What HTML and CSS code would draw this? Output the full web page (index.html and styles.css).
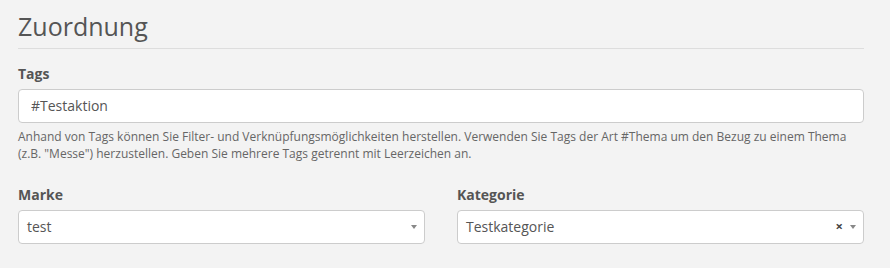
FILE: index.html
```html
<!DOCTYPE html>
<html lang="de">
<head>
  <meta charset="UTF-8" />
  <meta name="viewport" content="width=device-width, initial-scale=1.0" />
  <title>Zuordnung</title>
  <link rel="stylesheet" href="styles.css">
</head>
<body>
  <!-- ZUORDNUNG -->
  <section class="panel">
    <h2 class="panel-title">Zuordnung</h2>

    <div class="form-group">
      <label class="control-label">Tags</label>
      <input class="form-control" type="text" value="#Testaktion" />
      <p class="help-block">Anhand von Tags können Sie Filter- und Verknüpfungsmöglichkeiten herstellen. Verwenden Sie Tags der Art #Thema um den Bezug zu einem Thema (z.B. "Messe") herzustellen. Geben Sie mehrere Tags getrennt mit Leerzeichen an.</p>
    </div>

    <div class="row">
      <div class="form-group">
        <label class="control-label">Marke</label>
        <div class="select-box">
          <span class="select-value">test</span>
          <span class="select-arrow"></span>
        </div>
      </div>
      <div class="form-group">
        <label class="control-label">Kategorie</label>
        <div class="select-box">
          <span class="select-value">Testkategorie</span>
          <span class="select-clear">&times;</span>
          <span class="select-arrow"></span>
        </div>
      </div>
    </div>
  </section>
</body>
</html>
```

FILE: styles.css
```css
* {margin: 0; padding: 0; box-sizing: border-box;}
body {
  font-family: 'Open Sans', 'Liberation Sans', sans-serif;
  background: #f3f3f3;
  color: #555;
  font-size: 14px;
  line-height: 1.42857;
}

.panel {padding: 12px 26px 0 18px;}

.panel-title {
  font-size: 25px; font-weight: 400; line-height: 28px; color: #555;
  padding-bottom: 8px; border-bottom: 1px solid #ddd; margin-bottom: 15px;
}

.control-label {display: block; font-weight: 700; margin-bottom: 5px; color: #555;}

.form-control {
  display: block; width: 100%; height: 34px; padding: 6px 12px;
  font-family: inherit; font-size: 14px; color: #555;
  background: #fff; border: 1px solid #ccc; border-radius: 4px; outline: none;
}

.help-block {font-size: 12px; line-height: 17px; color: #666; margin-top: 5px; margin-bottom: 23px;}

.row {display: grid; grid-template-columns: 1fr 1fr; gap: 32px;}

/* Select2 look */
.select-box {
  display: flex; align-items: center; height: 34px; padding: 0 7px 0 8px;
  background: #fff; border: 1px solid #ccc; border-radius: 4px;
}
.select-value {flex: 1; font-size: 14px; color: #555;}
.select-clear {font-size: 13px; font-weight: 700; color: #444; margin-right: 7px; line-height: 1;}
.select-arrow {
  width: 0; height: 0;
  border-left: 3px solid transparent; border-right: 3px solid transparent;
  border-top: 4px solid #888;
}
```
